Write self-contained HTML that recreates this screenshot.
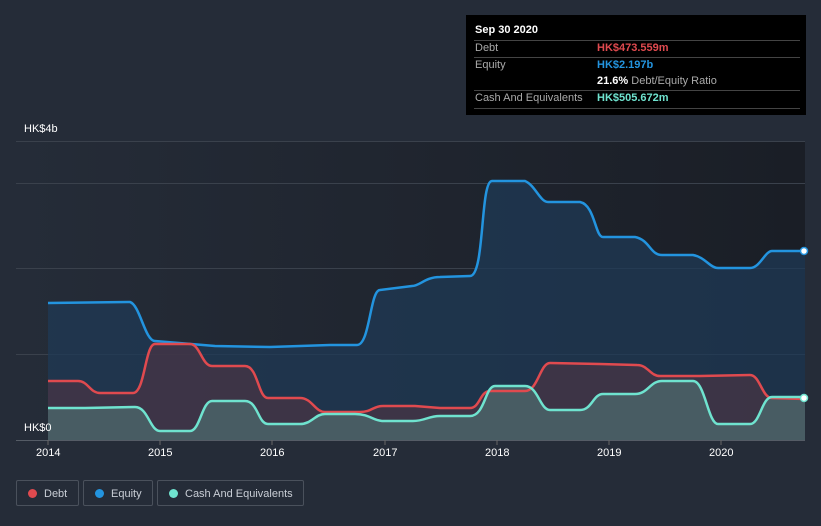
<!DOCTYPE html>
<html><head><style>
body{margin:0;width:821px;height:526px;background:#252c38;font-family:"Liberation Sans",sans-serif;overflow:hidden;position:relative}
.tip{position:absolute;left:466px;top:15px;width:340px;height:100px;background:#000;color:#fff;font-size:11px}
.tip .r{position:absolute;left:8px;right:6px;border-top:1px solid #444}
.tip span{position:absolute}
.leg{position:absolute;top:480px;height:26px;border:1px solid #4a515c;border-radius:2px;color:#c9ced6;font-size:11px;line-height:26px;box-sizing:border-box}
.leg i{display:inline-block;width:9px;height:9px;border-radius:50%;margin:0 7px 0 11px;vertical-align:-1px}
.ax{position:absolute;color:#fff;font-size:11px}
</style></head><body>
<svg width="821" height="526" style="position:absolute;left:0;top:0">
<defs><linearGradient id="bg" x1="0" x2="1"><stop offset="0" stop-color="#252c38"/><stop offset="1" stop-color="#1a1e26"/></linearGradient></defs>
<rect x="16" y="141" width="789" height="299" fill="url(#bg)"/>
<g stroke="#3a414c" stroke-width="1"><line x1="16" y1="141.5" x2="805" y2="141.5"/><line x1="16" y1="183.5" x2="805" y2="183.5"/><line x1="16" y1="268.5" x2="805" y2="268.5"/><line x1="16" y1="354.5" x2="805" y2="354.5"/><line x1="16" y1="440.5" x2="805" y2="440.5" stroke="#555c66"/></g>
<path d="M48,303 L130,302 C140,305 145,341 155,341 L215,346 L270,347 L330,345 L357,345 C370,345 370,290 380,290 L412,286 C420,286 425,277 440,277 L470,276 C485,276 480,181 492,181 L525,181 C535,185 540,202 548,202 L580,202 C595,205 595,237 603,237 L635,237 C650,240 650,255 662,255 L693,255 C705,257 710,268 718,268 L750,268 C760,268 765,251 772,251 L805,251 L805,440 L48,440Z" fill="#1f3a55" fill-opacity="0.75"/>
<path d="M48,381 L78,381 C88,381 90,393 100,393 L133,393 C145,393 145,344 155,344 L190,344 C200,344 202,366 212,366 L245,366 C258,366 258,398 268,398 L300,398 C312,398 315,412 325,412 L360,412 C372,412 373,406 383,406 L415,406 L440,408 L470,408 C480,408 480,391 490,391 L525,391 C538,391 540,363 550,363 L600,364 L637,365 C648,365 650,376 660,376 L700,376 L750,375 C760,375 762,398 772,398 L805,399 L805,440 L48,440Z" fill="#4a3545" fill-opacity="0.7"/>
<path d="M48,408 L85,408 L135,407 C148,407 150,431 160,431 L190,431 C200,431 202,401 212,401 L245,401 C258,401 258,424 268,424 L300,424 C312,424 315,414 325,414 L355,414 C370,414 373,421 383,421 L413,421 C425,421 428,416 440,416 L470,416 C485,416 485,386 495,386 L525,386 C538,386 540,410 550,410 L580,410 C592,410 593,394 603,394 L635,394 C648,394 650,381 662,381 L693,381 C705,381 708,424 718,424 L750,424 C760,424 762,397 772,397 L805,397 L805,440 L48,440Z" fill="#4a6468" fill-opacity="0.85"/>
<path d="M48,303 L130,302 C140,305 145,341 155,341 L215,346 L270,347 L330,345 L357,345 C370,345 370,290 380,290 L412,286 C420,286 425,277 440,277 L470,276 C485,276 480,181 492,181 L525,181 C535,185 540,202 548,202 L580,202 C595,205 595,237 603,237 L635,237 C650,240 650,255 662,255 L693,255 C705,257 710,268 718,268 L750,268 C760,268 765,251 772,251 L805,251" fill="none" stroke="#2394df" stroke-width="2.5"/>
<path d="M48,381 L78,381 C88,381 90,393 100,393 L133,393 C145,393 145,344 155,344 L190,344 C200,344 202,366 212,366 L245,366 C258,366 258,398 268,398 L300,398 C312,398 315,412 325,412 L360,412 C372,412 373,406 383,406 L415,406 L440,408 L470,408 C480,408 480,391 490,391 L525,391 C538,391 540,363 550,363 L600,364 L637,365 C648,365 650,376 660,376 L700,376 L750,375 C760,375 762,398 772,398 L805,399" fill="none" stroke="#e04a4f" stroke-width="2.5"/>
<path d="M48,408 L85,408 L135,407 C148,407 150,431 160,431 L190,431 C200,431 202,401 212,401 L245,401 C258,401 258,424 268,424 L300,424 C312,424 315,414 325,414 L355,414 C370,414 373,421 383,421 L413,421 C425,421 428,416 440,416 L470,416 C485,416 485,386 495,386 L525,386 C538,386 540,410 550,410 L580,410 C592,410 593,394 603,394 L635,394 C648,394 650,381 662,381 L693,381 C705,381 708,424 718,424 L750,424 C760,424 762,397 772,397 L805,397" fill="none" stroke="#6fe3cf" stroke-width="2.5"/>
<circle cx="804" cy="251" r="3.5" fill="#fff" stroke="#2394df" stroke-width="1.5"/>
<circle cx="804" cy="398" r="3.5" fill="#fff" stroke="#6fe3cf" stroke-width="1.5"/>
<g stroke="#666" stroke-width="1"><line x1="48" y1="440" x2="48" y2="445"/><line x1="160" y1="440" x2="160" y2="445"/><line x1="272" y1="440" x2="272" y2="445"/><line x1="385" y1="440" x2="385" y2="445"/><line x1="497" y1="440" x2="497" y2="445"/><line x1="609" y1="440" x2="609" y2="445"/><line x1="721" y1="440" x2="721" y2="445"/></g>
</svg>
<div class="ax" style="left:24px;top:123px">HK$4b</div>
<div class="ax" style="left:24px;top:422px">HK$0</div>
<div class="ax" style="left:36px;top:447px">2014</div>
<div class="ax" style="left:148px;top:447px">2015</div>
<div class="ax" style="left:260px;top:447px">2016</div>
<div class="ax" style="left:373px;top:447px">2017</div>
<div class="ax" style="left:485px;top:447px">2018</div>
<div class="ax" style="left:597px;top:447px">2019</div>
<div class="ax" style="left:709px;top:447px">2020</div>
<div class="tip">
<span style="left:9px;top:9px;font-weight:bold">Sep 30 2020</span>
<div class="r" style="top:25px"></div>
<span style="left:9px;top:27px;color:#aaa">Debt</span><span style="left:131px;top:27px;color:#e04a4f;font-weight:bold">HK$473.559m</span>
<div class="r" style="top:42px"></div>
<span style="left:9px;top:44px;color:#aaa">Equity</span><span style="left:131px;top:44px;color:#2394df;font-weight:bold">HK$2.197b</span>
<span style="left:131px;top:60px"><b>21.6%</b> <span style="position:static;color:#aaa">Debt/Equity Ratio</span></span>
<div class="r" style="top:75px"></div>
<span style="left:9px;top:77px;color:#aaa">Cash And Equivalents</span><span style="left:131px;top:77px;color:#6fe3cf;font-weight:bold">HK$505.672m</span>
<div class="r" style="top:93px"></div>
</div>
<div class="leg" style="left:16px;width:63px"><i style="background:#e04a4f"></i>Debt</div>
<div class="leg" style="left:83px;width:70px"><i style="background:#2394df"></i>Equity</div>
<div class="leg" style="left:157px;width:147px"><i style="background:#6fe3cf"></i>Cash And Equivalents</div>
</body></html>
